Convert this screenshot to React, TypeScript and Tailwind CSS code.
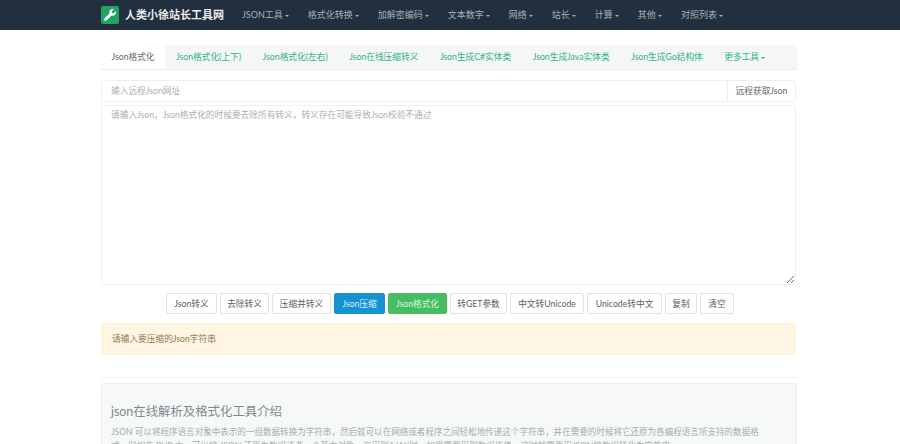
import { FaWrench } from 'react-icons/fa';

const NAV_ITEMS = ['JSON工具', '格式化转换', '加解密编码', '文本数字', '网络', '站长', '计算', '其他', '对照列表'];
const TABS = ['Json格式化(上下)', 'Json格式化(左右)', 'Json在线压缩转义', 'Json生成C#实体类', 'Json生成Java实体类', 'Json生成Go结构体'];
const ACTIONS = [
  { label: 'Json转义', width: 'w-[51px]' },
  { label: '去除转义', width: 'w-[49px]' },
  { label: '压缩并转义', width: 'w-[59px]' },
  { label: 'Json压缩', width: 'w-[51px]', color: 'bg-[#1592cf] border-[#1592cf] text-[#d5eefa]' },
  { label: 'Json格式化', width: 'w-[59px]', color: 'bg-[#46bd62] border-[#46bd62] text-[#d8f5df]' },
  { label: '转GET参数', width: 'w-[57px]' },
  { label: '中文转Unicode', width: 'w-[74px]' },
  { label: 'Unicode转中文', width: 'w-[75px]' },
  { label: '复制', width: 'w-[32px]' },
  { label: '清空', width: 'w-[34px]' },
];

const FONT = "font-['Lato','Noto_Sans_CJK_SC',sans-serif]";

function Caret({ className }: { className: string }) {
  return <span className={`ml-[2px] inline-block border-x-[2px] border-t-[2px] border-x-transparent align-middle ${className}`} />;
}

export default function App() {
  return (
    <div className={`h-[444px] overflow-hidden bg-white ${FONT} text-[8.7px] text-[#555]`}>
      {/* Navbar */}
      <nav className="flex h-[30px] items-center bg-[#212f3e] pl-[101px]">
        <span className="flex h-[18px] w-[18px] items-center justify-center rounded-[2px] bg-[#1fa463] text-white">
          <FaWrench size={12} />
        </span>
        <span className="ml-[6px] w-[117px] text-[11px] font-bold text-[#e8ecef]">人类小徐站长工具网</span>
        <div className="flex gap-[19px] text-[9px]">
          {NAV_ITEMS.map((item) => (
            <span key={item} className="whitespace-nowrap text-[#a5b0ba]">
              {item}
              <Caret className="border-t-[#a5b0ba]" />
            </span>
          ))}
        </div>
      </nav>

      <main className="ml-[101px] w-[696px] pt-[15px]">
        {/* Tabs */}
        <div className="flex h-[25px] items-stretch rounded-t-[2px] border-b border-[#e9ecec] bg-[#f5f6f6]">
          <span className="flex w-[64px] items-center justify-center rounded-t-[2px] bg-white text-[#5f6b6d]">Json格式化</span>
          <div className="ml-[11px] flex items-center gap-[21.5px] whitespace-nowrap text-[#2fb381]">
            {TABS.map((tab) => (
              <span key={tab}>{tab}</span>
            ))}
            <span>
              更多工具
              <Caret className="border-t-[#2fb381]" />
            </span>
          </div>
        </div>

        {/* Remote url */}
        <div className="mt-[10px] flex h-[22px] w-[695px] rounded-[3px] border border-[#ecf0f1]">
          <input
            placeholder="输入远程Json网址"
            className="min-w-0 flex-1 px-[9px] text-[8.7px] outline-none placeholder:text-[#a9b1b3]"
          />
          <span className="flex w-[68px] items-center justify-center border-l border-[#ecf0f1] text-[#666]">远程获取Json</span>
        </div>

        <textarea
          placeholder="请输入Json，Json格式化的时候要去除所有转义，转义存在可能导致Json校验不通过"
          className="mt-[3px] block h-[180px] w-[695px] rounded-[3px] border border-[#ecf0f1] px-[9px] py-[3px] text-[8.7px] leading-[12px] outline-none placeholder:text-[#a9b1b3]"
        />

        {/* Actions */}
        <div className="mt-[8px] flex gap-[3px] pl-[65px]">
          {ACTIONS.map(({ label, width, color }) => (
            <button
              key={label}
              className={`h-[21px] whitespace-nowrap rounded-[2px] border text-[8.7px] ${width} ${color ?? 'border-[#dfe3e4] bg-white text-[#5a5f60]'}`}
            >
              {label}
            </button>
          ))}
        </div>

        {/* Alert */}
        <div className="mt-[9px] flex h-[32px] w-[695px] items-center rounded-[2px] border border-[#fdf3dd] bg-[#fef6e3] px-[10px] text-[#8d7b55]">
          请输入要压缩的Json字符串
        </div>

        <hr className="mt-[22px] border-[#f3f5f5]" />

        {/* Intro */}
        <section className="mt-[5px] rounded-[3px] border border-[#eef1f1] bg-[#f7f9f9] pl-[9px] pr-[30px] pt-[19px]">
          <h2 className="text-[12.4px] leading-[18px] text-[#7c8a8c]">json在线解析及格式化工具介绍</h2>
          <p className="mt-[5px] text-[8.55px] leading-[13.5px] text-[#a3adaf]">
            JSON 可以将程序语言对象中表示的一组数据转换为字符串，然后就可以在网络或者程序之间轻松地传递这个字符串，并在需要的时候将它还原为各编程语言所支持的数据格式，例如在 PHP 中，可以将 JSON 还原为数组或者一个基本对象。在用到AJAX时，如果需要用到数组传值，这时就需要用JSON将数组转化为字符串。
          </p>
        </section>
      </main>
    </div>
  );
}
